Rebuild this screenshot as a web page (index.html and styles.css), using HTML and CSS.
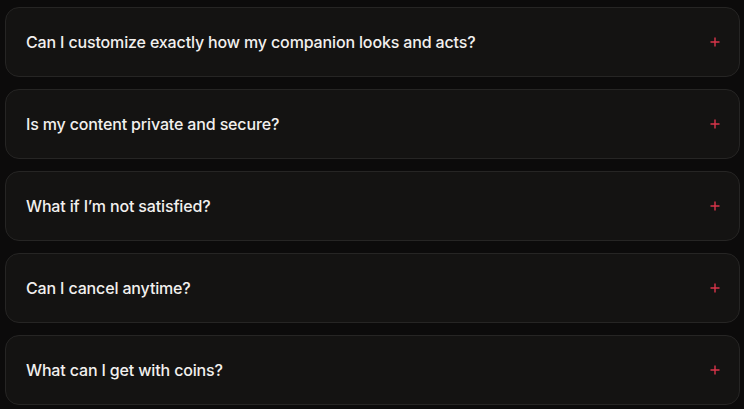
FILE: index.html
```html
<!DOCTYPE html>
<html lang="en">
<head>
<meta charset="utf-8">
<link rel="stylesheet" href="styles.css">
</head>
<body>
<div class="faq">
  <div class="item"><span class="q">Can I customize exactly how my companion looks and acts?</span><svg class="plus" width="10" height="10" viewBox="0 0 10 10"><path d="M5 0.5V9.5M0.5 5H9.5"/></svg></div>
  <div class="item"><span class="q">Is my content private and secure?</span><svg class="plus" width="10" height="10" viewBox="0 0 10 10"><path d="M5 0.5V9.5M0.5 5H9.5"/></svg></div>
  <div class="item"><span class="q">What if I’m not satisfied?</span><svg class="plus" width="10" height="10" viewBox="0 0 10 10"><path d="M5 0.5V9.5M0.5 5H9.5"/></svg></div>
  <div class="item"><span class="q">Can I cancel anytime?</span><svg class="plus" width="10" height="10" viewBox="0 0 10 10"><path d="M5 0.5V9.5M0.5 5H9.5"/></svg></div>
  <div class="item"><span class="q">What can I get with coins?</span><svg class="plus" width="10" height="10" viewBox="0 0 10 10"><path d="M5 0.5V9.5M0.5 5H9.5"/></svg></div>
</div>
</body>
</html>
```
FILE: styles.css
```css
html, body {
  margin: 0;
  background: #0c0b0b;
}
body {
  padding: 7px 4px 0 5px;
  font-family: Inter, "Noto Sans", sans-serif;
}
.faq {
  display: flex;
  flex-direction: column;
  gap: 12px;
}
.item {
  height: 70px;
  box-sizing: border-box;
  border: 1px solid #262524;
  border-radius: 14px;
  background: #141312;
  display: flex;
  align-items: center;
  justify-content: space-between;
  padding: 0 19px 0 20px;
}
.q {
  color: #f2f0ee;
  font-size: 16px;
  font-weight: 500;
  letter-spacing: -0.15px;
  margin-top: -1px;
}
.plus {
  stroke: #d9354a;
  stroke-width: 1.4;
  fill: none;
  margin-top: -1px;
}
```
